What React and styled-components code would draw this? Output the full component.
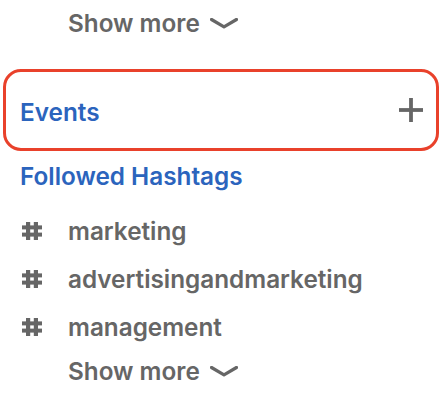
import React from "react";
import styled, { createGlobalStyle } from "styled-components";

const Global = createGlobalStyle`
  html, body { margin: 0; padding: 0; background: #ffffff; }
  body { font-family: Inter, "Noto Sans", "Liberation Sans", sans-serif; -webkit-font-smoothing: antialiased; }
`;

const Page = styled.div`
  width: 444px;
  height: 408px;
  box-sizing: border-box;
  display: flex;
  flex-direction: column;
  overflow: hidden;
`;

const ShowMoreRow = styled.button`
  display: flex;
  align-items: center;
  gap: 10px;
  height: ${(p) => p.$h}px;
  margin: 0;
  padding: 0 0 0 68px;
  border: none;
  background: none;
  color: #666666;
  font-family: inherit;
  font-size: 24.3px;
  font-weight: 600;
  cursor: pointer;
  align-self: flex-start;
`;

const HighlightBox = styled.div`
  display: flex;
  align-items: center;
  justify-content: space-between;
  height: 82px;
  box-sizing: border-box;
  margin: 23px 5px 0 3px;
  padding: 0 11px 0 14px;
  border: 3px solid #e9412b;
  border-radius: 18px;
`;

const SectionTitle = styled.div`
  color: #2b64bd;
  font-size: 24.3px;
  font-weight: 600;
  padding-top: ${(p) => p.$pt || 0}px;
`;

const PlusButton = styled.button`
  width: 28px;
  height: 28px;
  padding: 0;
  border: none;
  background: none;
  display: flex;
  align-items: center;
  justify-content: center;
  cursor: pointer;
`;

const HashtagsHeader = styled.div`
  height: 50px;
  display: flex;
  align-items: center;
  padding-left: 20px;
`;

const HashList = styled.ul`
  list-style: none;
  margin: 6px 0 0;
  padding: 0;
  display: flex;
  flex-direction: column;
`;

const HashItem = styled.li`
  height: 48px;
  display: flex;
  align-items: center;
  padding-left: 22px;
  gap: 26px;
  color: #666666;
  font-size: 24.3px;
  font-weight: 600;
`;

const HashIcon = () => (
  <svg width="20" height="18" viewBox="0 0 20 18" aria-hidden="true">
    <rect x="4" y="0" width="4.2" height="18" fill="#666" />
    <rect x="11.8" y="0" width="4.2" height="18" fill="#666" />
    <rect x="0" y="3.4" width="20" height="4" fill="#666" />
    <rect x="0" y="10.6" width="20" height="4" fill="#666" />
  </svg>
);

const Chevron = () => (
  <svg width="28" height="11" viewBox="0 0 28 11" aria-hidden="true">
    <polyline points="1.5,1.5 14,8.8 26.5,1.5" fill="none" stroke="#666" strokeWidth="3.2" strokeLinecap="round" strokeLinejoin="round" />
  </svg>
);

const Plus = () => (
  <svg width="24" height="24" viewBox="0 0 24 24" aria-hidden="true">
    <rect x="10.1" y="0" width="3.8" height="24" fill="#666" />
    <rect x="0" y="10.1" width="24" height="3.8" fill="#666" />
  </svg>
);

const tags = ["marketing", "advertisingandmarketing", "management"];

export default function App() {
  return (
    <>
      <Global />
      <Page>
        <ShowMoreRow $h={46}>
          Show more <Chevron />
        </ShowMoreRow>
        <HighlightBox>
          <SectionTitle $pt={3}>Events</SectionTitle>
          <PlusButton aria-label="Add event">
            <Plus />
          </PlusButton>
        </HighlightBox>
        <HashtagsHeader>
          <SectionTitle>Followed Hashtags</SectionTitle>
        </HashtagsHeader>
        <HashList>
          {tags.map((t) => (
            <HashItem key={t}>
              <HashIcon />
              {t}
            </HashItem>
          ))}
        </HashList>
        <ShowMoreRow $h={40}>
          Show more <Chevron />
        </ShowMoreRow>
      </Page>
    </>
  );
}
